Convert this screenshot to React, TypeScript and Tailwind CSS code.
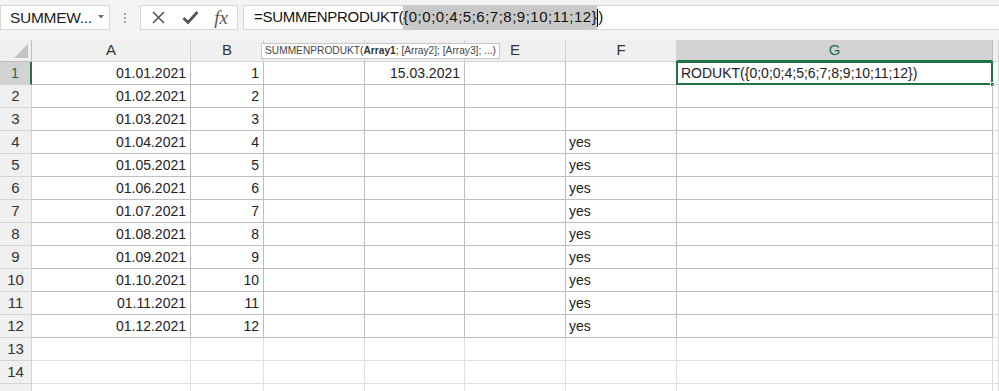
import React from "react";

const cols = ["A", "B", "C", "D", "E", "F", "G", ""];
// C and D header letters sit under the function tooltip
const hiddenHeaders = ["C", "D"];
const rows = Array.from({ length: 15 }, (_, i) => i + 1);

const cellText = (r: number, c: number): { text: string; align: "left" | "right" } | null => {
  if (r <= 12 && c === 0) return { text: `01.${String(r).padStart(2, "0")}.2021`, align: "right" };
  if (r <= 12 && c === 1) return { text: String(r), align: "right" };
  if (r === 1 && c === 3) return { text: "15.03.2021", align: "right" };
  if (r >= 4 && r <= 12 && c === 5) return { text: "yes", align: "left" };
  if (r === 1 && c === 6) return { text: "RODUKT({0;0;0;4;5;6;7;8;9;10;11;12})", align: "left" };
  return null;
};

const App = () => {
  return (
    <div
      className="h-[391px] w-[999px] overflow-hidden bg-white text-[#222]"
      style={{ fontFamily: '"Liberation Sans", Arial, sans-serif' }}
    >
      {/* formula bar */}
      <div className="flex h-[40px] items-start bg-[#f3f3f3] pt-[5px]">
        <div className="flex h-[25px] w-[110px] items-center justify-between border border-[#d6d6d6] bg-white pl-[9px] pr-[4px] text-[15.5px]">
          <span className="tracking-[-0.3px]">SUMMEW...</span>
          <svg width="8" height="6" viewBox="0 0 8 6" className="mb-[2px]">
            <polygon points="1,1 7,1 4,4.5" fill="#6b6b6b" />
          </svg>
        </div>
        <div className="flex h-[25px] w-[30px] items-center justify-center">
          <svg width="4" height="12" viewBox="0 0 4 12">
            <circle cx="2" cy="2" r="1" fill="#8a8a8a" />
            <circle cx="2" cy="6" r="1" fill="#8a8a8a" />
            <circle cx="2" cy="10" r="1" fill="#8a8a8a" />
          </svg>
        </div>
        <div className="flex h-[25px] w-[98px] items-center border border-[#d6d6d6] bg-white">
          <div className="flex w-[34px] justify-center">
            <svg width="15" height="15" viewBox="0 0 15 15">
              <path d="M2 2 L13 13 M13 2 L2 13" stroke="#555" strokeWidth="1.6" />
            </svg>
          </div>
          <div className="flex w-[30px] justify-center">
            <svg width="17" height="15" viewBox="0 0 17 15">
              <path d="M1.5 8 L6 12.5 L15.5 2" stroke="#555" strokeWidth="2.8" fill="none" />
            </svg>
          </div>
          <div className="flex w-[32px] justify-center">
            <span
              className="text-[19px] italic leading-none text-[#555]"
              style={{ fontFamily: '"Liberation Serif", "Times New Roman", serif' }}
            >
              fx
            </span>
          </div>
        </div>
        <div className="ml-[5px] flex h-[25px] flex-1 items-center border-y border-l border-[#d6d6d6] bg-white pl-[10px] text-[15px] text-[#111]">
          <span className="tracking-[-0.3px]">=SUMMENPRODUKT(</span>
          <span className="bg-[#c9c9c9] py-[1px] tracking-[0.5px]">{"{0;0;0;4;5;6;7;8;9;10;11;12}"}</span>
          <span className="h-[18px] w-px bg-black" />
          <span>)</span>
        </div>
      </div>

      {/* grid */}
      <div className="relative grid grid-cols-[32px_159px_73px_101px_100px_101px_111px_316px_1fr] grid-rows-[22px_repeat(15,23px)]">
        {/* header row */}
        <div className="relative border-b border-r border-[#bdbdbd] bg-[#f0f0f0]">
          <svg width="14" height="14" viewBox="0 0 14 14" className="absolute bottom-[3px] right-[3px]">
            <polygon points="14,0 14,14 0,14" fill="#c3c3c3" />
          </svg>
        </div>
        {cols.map((c, i) =>
          c === "G" ? (
            <div
              key={i}
              className="flex items-center justify-center border-b-2 border-r border-b-[#217346] border-r-[#bdbdbd] bg-[#d2d2d2] text-[15px] text-[#217346]"
            >
              {c}
            </div>
          ) : (
            <div
              key={i}
              className="flex items-center justify-center border-b border-r border-[#d4d4d4] bg-[#f0f0f0] text-[15px] text-[#333]"
            >
              {hiddenHeaders.includes(c) ? null : c}
            </div>
          )
        )}

        {rows.map((r) => (
          <React.Fragment key={r}>
            {r === 1 ? (
              <div className="flex items-center justify-center border-b border-r-2 border-b-[#d4d4d4] border-r-[#217346] bg-[#d2d2d2] text-[15px] text-[#217346]">
                {r}
              </div>
            ) : (
              <div className="flex items-center justify-center border-b border-r border-[#d4d4d4] bg-[#f0f0f0] text-[15px] text-[#333]">
                {r < 15 ? r : null}
              </div>
            )}
            {cols.map((_, c) => {
              const t = cellText(r, c);
              const inRange = r <= 12 && c <= 6;
              const border = inRange ? "border-[#bdbdbd]" : "border-[#dedede]";
              return (
                <div
                  key={c}
                  className={`relative flex items-end overflow-visible whitespace-nowrap border-b border-r ${border} pb-[2px] text-[14px] leading-[17px] ${
                    t?.align === "right" ? "justify-end pr-[4px]" : "justify-start pl-[3px]"
                  }`}
                >
                  {t ? <span className={c === 6 ? "pl-[1px]" : ""}>{t.text}</span> : null}
                  {r === 1 && c === 6 ? (
                    <>
                      <div className="pointer-events-none absolute -bottom-px -left-px -right-px -top-px border-2 border-[#217346]" />
                      <div className="absolute -bottom-[3px] -right-[3px] h-[5px] w-[5px] border border-white bg-[#217346]" />
                    </>
                  ) : null}
                </div>
              );
            })}
          </React.Fragment>
        ))}

        {/* function tooltip */}
        <div className="absolute left-[261px] top-[3px] flex h-[16px] items-center whitespace-nowrap border border-[#c6c6c6] bg-white px-[3px] text-[10.2px] text-[#444]">
          SUMMENPRODUKT(<b className="font-bold text-[#333]">Array1</b>; [Array2]; [Array3]; ...)
        </div>
      </div>
    </div>
  );
};

export default App;
